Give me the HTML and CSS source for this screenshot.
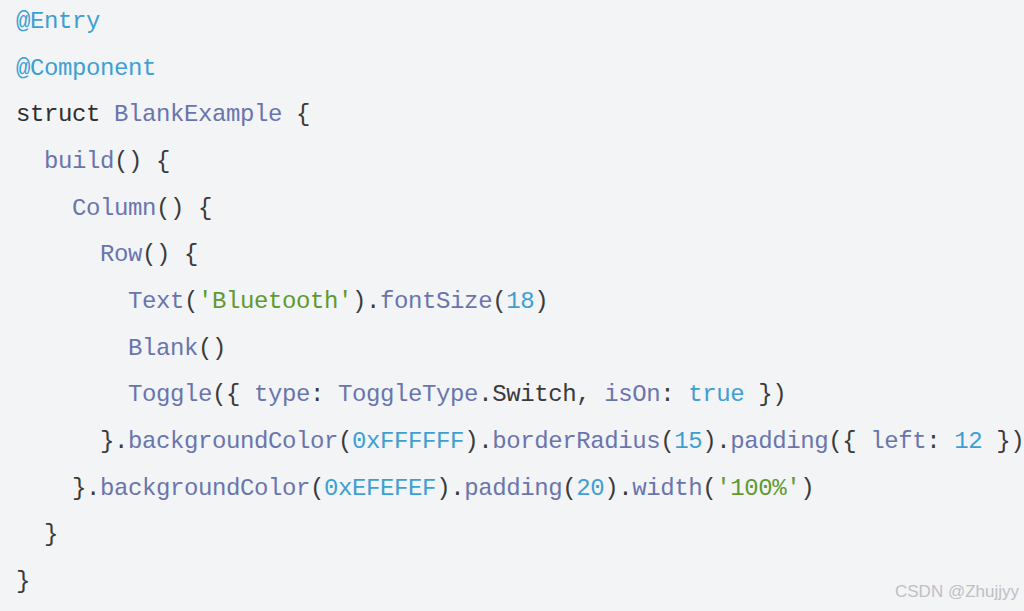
FILE: index.html
```html
<!DOCTYPE html>
<html>
<head>
<meta charset="utf-8">
<link rel="stylesheet" href="styles.css">
</head>
<body>
<div class="block">
<pre class="code"><span class="an">@Entry</span>
<span class="an">@Component</span>
<span class="kw">struct</span> <span class="id">BlankExample</span> <span class="p">{</span>
  <span class="id">build</span><span class="p">() {</span>
    <span class="id">Column</span><span class="p">() {</span>
      <span class="id">Row</span><span class="p">() {</span>
        <span class="id">Text</span><span class="p">(</span><span class="st">'Bluetooth'</span><span class="p">).</span><span class="id">fontSize</span><span class="p">(</span><span class="nu">18</span><span class="p">)</span>
        <span class="id">Blank</span><span class="p">()</span>
        <span class="id">Toggle</span><span class="p">({ </span><span class="id">type</span><span class="p">: </span><span class="id">ToggleType</span><span class="p">.Switch, </span><span class="id">isOn</span><span class="p">: </span><span class="nu">true</span><span class="p"> })</span>
      <span class="p">}.</span><span class="id">backgroundColor</span><span class="p">(</span><span class="nu">0xFFFFFF</span><span class="p">).</span><span class="id">borderRadius</span><span class="p">(</span><span class="nu">15</span><span class="p">).</span><span class="id">padding</span><span class="p">({ </span><span class="id">left</span><span class="p">: </span><span class="nu">12</span><span class="p"> })</span>
    <span class="p">}.</span><span class="id">backgroundColor</span><span class="p">(</span><span class="nu">0xEFEFEF</span><span class="p">).</span><span class="id">padding</span><span class="p">(</span><span class="nu">20</span><span class="p">).</span><span class="id">width</span><span class="p">(</span><span class="st">'100%'</span><span class="p">)</span>
  <span class="p">}</span>
<span class="p">}</span></pre>
<div class="mark">CSDN @Zhujjyy</div>
</div>
</body>
</html>
```

FILE: styles.css
```css
html, body {
  margin: 0;
  padding: 0;
  background: #f3f4f6;
}
.block {
  position: relative;
  width: 1024px;
  height: 611px;
  overflow: hidden;
  background: #f3f4f6;
}
.code {
  margin: 0;
  padding: 1px 0 0 16px;
  font-family: "Liberation Mono", monospace;
  font-size: 24px;
  letter-spacing: -0.4px;
  line-height: 46.67px;
  color: #333;
  white-space: pre;
  position: relative;
  top: -2px;
}
.an { color: #3d9fd2; }
.kw { color: #2f2f2f; }
.id { color: #6a74ad; }
.p  { color: #3a3a3a; }
.st { color: #5f9a2f; }
.nu { color: #3d9fd2; }
.mark {
  position: absolute;
  right: 5px;
  bottom: 9px;
  font-family: "Liberation Sans", Arial, sans-serif;
  font-size: 17px;
  color: #bec0c4;
}
```
